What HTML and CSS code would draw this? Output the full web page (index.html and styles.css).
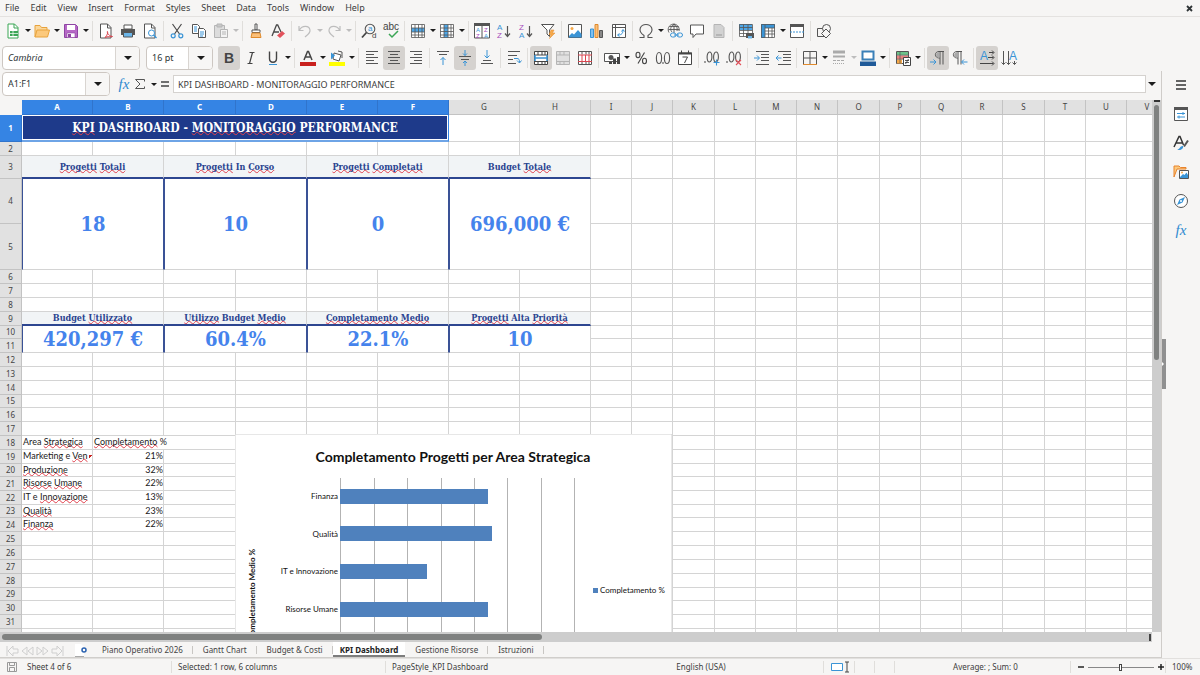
FILE: index.html
```html
<!DOCTYPE html>
<html lang="it">
<head>
<meta charset="utf-8">
<title>KPI Dashboard</title>
<link rel="stylesheet" href="styles.css">
</head>
<body>
<div class="app">
  <nav class="menubar">
    <button>File</button><button>Edit</button><button>View</button><button>Insert</button><button>Format</button><button>Styles</button><button>Sheet</button><button>Data</button><button>Tools</button><button>Window</button><button>Help</button>
    <button class="close" aria-label="Close"><svg width="7" height="7" viewBox="0 0 7 7"><path d="M1 1l5 5M6 1L1 6" stroke="#2e3436" stroke-width="1.8"/></svg></button>
  </nav>

  <div class="toolbar">
    <button class="tool" aria-label="New"><svg viewBox="0 0 16 16"><path d="M3 1h6.500l3.500 3.500V15H3z" fill="#fff" stroke="#3aa655"/><path d="M9 1v4h4" fill="none" stroke="#3aa655"/><path d="M5 8h8v5H5z" fill="#3aa655"/><path d="M5 10.500h8M8 8v5" stroke="#fff" stroke-width=".7"/></svg></button><button class="drop" aria-label="New options"></button>
    <button class="tool" aria-label="Open"><svg viewBox="0 0 16 16"><path d="M1 14V2.500h5l1.500 2H13V7" fill="#fbd79a" stroke="#e8a33d"/><path d="M1 14L3 7h12.500l-2 7z" fill="#fcc97c" stroke="#e8a33d"/></svg></button><button class="drop" aria-label="Open options"></button>
    <button class="tool" aria-label="Save"><svg viewBox="0 0 16 16"><path d="M1.500 1.500h11l2 2v11h-13z" fill="#b668c6" stroke="#8e44a3"/><path d="M4 2h8v5H4z" fill="#fff"/><path d="M4 10h8v4.500H4z" fill="#fff" stroke="#8e44a3" stroke-width=".6"/><path d="M5 11h3v3H5z" fill="#8e44a3"/></svg></button><button class="drop" aria-label="Save options"></button>
    <i class="sep"></i>
    <button class="tool" aria-label="Export as PDF"><svg viewBox="0 0 16 16"><path d="M2.500 1h7l3.500 3.500V15H2.500z" fill="#fff" stroke="#555"/><path d="M9.500 1v4H13" fill="none" stroke="#555"/><path d="M7 14.500c2.500-2 3-5.500 2.500-6s-.5 4 5 5c-1.500.8-5-.5-7.500 1z" fill="none" stroke="#d9454f"/></svg></button>
    <button class="tool" aria-label="Print"><svg viewBox="0 0 16 16"><path d="M4 2h8v4H4z" fill="#fff" stroke="#555"/><path d="M1 6h14v6H1z" fill="#555"/><path d="M3.500 9.500h9V14h-9z" fill="#6bb5e8" stroke="#555"/></svg></button>
    <button class="tool" aria-label="Print preview"><svg viewBox="0 0 16 16"><path d="M2.500 1h7l3.500 3.500V15H2.500z" fill="#fff" stroke="#555"/><path d="M9.500 1v4H13" fill="none" stroke="#555"/><circle cx="9.500" cy="10" r="3" fill="#fff" stroke="#3a94d6"/><path d="M11.500 12l3 3" stroke="#3a94d6" stroke-width="1.4"/></svg></button>
    <i class="sep"></i>
    <button class="tool" aria-label="Cut"><svg viewBox="0 0 16 16" fill="none"><path d="M3.500 1l7 10M12.500 1l-7 10" stroke="#4a4a4a" stroke-width="1.200"/><circle cx="4.200" cy="12.800" r="2" stroke="#3a94d6" stroke-width="1.200"/><circle cx="11.800" cy="12.800" r="2" stroke="#3a94d6" stroke-width="1.200"/></svg></button>
    <button class="tool" aria-label="Copy"><svg viewBox="0 0 16 16" fill="#fff" stroke="#555"><path d="M1.500 1.500h5l2 2v7h-7z"/><path d="M7.500 5.500h5l2 2v7h-7z"/><path d="M3 4h3M3 6h3M3 8h3M9 9h4M9 11h4M9 13h3" stroke="#3a94d6"/></svg></button>
    <button class="tool" aria-label="Paste" disabled><svg viewBox="0 0 16 16" fill="#dcdcdc" stroke="#b5b5b5"><path d="M1.500 2.500h10v12h-10z"/><path d="M4 1h5v3H4z" fill="#c8c8c8"/><path d="M7.500 6.500h7v8h-7z" fill="#f3f3f3"/><path d="M9 9h4M9 11h4"/></svg></button><button class="drop" aria-label="Paste options" disabled></button>
    <i class="sep"></i>
    <button class="tool" aria-label="Clone formatting"><svg viewBox="0 0 16 16"><path d="M7 1h2v6H7z" fill="#fff" stroke="#555"/><path d="M4 7h8v2.500H4z" fill="#fff" stroke="#555"/><path d="M4 10h8l1 4.500H3z" fill="#fbc07a" stroke="#e08a2c"/></svg></button>
    <button class="tool" aria-label="Clear formatting"><svg viewBox="0 0 16 16"><path d="M2 13L6.500 2h1.200L11 9M4 9h5" fill="none" stroke="#4a4a4a" stroke-width="1.300"/><path d="M7 12.500l5-4.500 3 2.500-5 4.500z" fill="#e2525c"/></svg></button>
    <i class="sep"></i>
    <button class="tool" aria-label="Undo" disabled><svg viewBox="0 0 16 16" fill="none" stroke="#bdbdbd" stroke-width="1.200"><path d="M2 3v4.500h4.500M2.500 7C5 2.500 12 2 13 7c.5 3-2 4.500-5 7"/></svg></button><button class="drop" aria-label="Undo list" disabled></button>
    <button class="tool" aria-label="Redo" disabled><svg viewBox="0 0 16 16" fill="none" stroke="#bdbdbd" stroke-width="1.200"><path d="M14 3v4.500H9.500M13.500 7C11 2.500 4 2 3 7c-.5 3 2 4.500 5 7"/></svg></button><button class="drop" aria-label="Redo list" disabled></button>
    <i class="sep"></i>
    <button class="tool" aria-label="Find and replace"><svg viewBox="0 0 16 16" fill="none"><circle cx="9" cy="6" r="4.800" stroke="#555" stroke-width="1.100"/><path d="M5.500 9.500L1 14.500" stroke="#444" stroke-width="1.800"/><text x="7" y="8" class="letter small blue">a</text><text x="11" y="15" class="letter small">d</text></svg></button>
    <button class="tool" aria-label="Spelling"><svg viewBox="0 0 16 16" fill="none"><text x="0" y="7" class="letter abc">abc</text><path d="M6 11l3 3 6-6" stroke="#3aa655" stroke-width="1.500"/></svg></button>
    <i class="sep"></i>
    <button class="tool" aria-label="Row"><svg viewBox="0 0 16 16" fill="none"><path d="M1.500 1.500h13v13h-13z" fill="#fff"/><path d="M1.500 5h13v4h-13z" fill="#4ea6e6"/><path d="M1.500 1.500h13v13h-13zM1.500 5h13M1.500 9h13M1.500 12h13M5 1.500v13M8.500 1.500v13M12 1.500v13" stroke="#555" stroke-width=".8"/></svg></button><button class="drop" aria-label="Row options"></button>
    <button class="tool" aria-label="Column"><svg viewBox="0 0 16 16" fill="none"><path d="M1.500 1.500h13v13h-13z" fill="#fff"/><path d="M5 1.500h4v13H5z" fill="#4ea6e6"/><path d="M1.500 1.500h13v13h-13zM1.500 5h13M1.500 8.500h13M1.500 12h13M5 1.500v13M9 1.500v13M12 1.500v13" stroke="#555" stroke-width=".8"/></svg></button><button class="drop" aria-label="Column options"></button>
    <i class="sep"></i>
    <button class="tool" aria-label="Sort"><svg viewBox="0 0 16 16"><path d="M.5 1h15v14H.5z" fill="#fff" stroke="#555"/><path d="M0 0h16v3H0z" fill="#555"/><path d="M8 3v12" stroke="#555"/><text x="2" y="9" class="letter tiny blue">A</text><text x="2" y="15" class="letter tiny purple">Z</text><text x="10" y="9" class="letter tiny purple">Z</text><text x="10" y="15" class="letter tiny blue">A</text></svg></button>
    <button class="tool" aria-label="Sort ascending"><svg viewBox="0 0 16 16"><text x="1" y="7" class="letter small blue">A</text><text x="1" y="15" class="letter small purple">Z</text><path d="M11.500 3v10M9 10.500l2.500 3 2.500-3" fill="none" stroke="#555" stroke-width="1.200"/></svg></button>
    <button class="tool" aria-label="Sort descending"><svg viewBox="0 0 16 16"><text x="1" y="7" class="letter small purple">Z</text><text x="1" y="15" class="letter small blue">A</text><path d="M11.500 3v10M9 10.500l2.500 3 2.500-3" fill="none" stroke="#555" stroke-width="1.200"/></svg></button>
    <button class="tool" aria-label="AutoFilter"><svg viewBox="0 0 16 16"><path d="M1.500 1.500h12.500L9.500 7v6.500L7 11V7z" fill="#fff" stroke="#555"/><path d="M11 7h3l-1.500 3H15l-5.500 5.500L11 11.500H9z" fill="#f6a94a" stroke="#e08a2c" stroke-width=".5"/></svg></button>
    <i class="sep"></i>
    <button class="tool" aria-label="Insert image"><svg viewBox="0 0 16 16"><path d="M1.500 1.500h13v13h-13z" fill="#fff" stroke="#555"/><circle cx="5" cy="5.500" r="1.500" fill="#f6a94a"/><path d="M2 13l3-3 2 1.500L11 7l3.500 4v3.500H2z" fill="#3a94d6"/></svg></button>
    <button class="tool" aria-label="Insert chart"><svg viewBox="0 0 16 16"><path d="M1.500 6h3v8.500h-3z" fill="#7fc0f0" stroke="#3a94d6"/><path d="M6 1.500h3v13H6z" fill="#fbc07a" stroke="#e08a2c"/><path d="M10.500 7.500h3v7h-3z" fill="#888" stroke="#555"/></svg></button>
    <button class="tool" aria-label="Insert pivot table"><svg viewBox="0 0 16 16"><path d="M1.500 1.500h13v13h-13zM1.500 4.500h13M4.500 1.500v13" fill="#fff" stroke="#555"/><path d="M7 12c4 0 5-2 5-5M10.500 8.500L12 6.500l1.500 2M8.500 10.500L6.500 12l2 1.500" fill="none" stroke="#3a94d6"/></svg></button>
    <i class="sep"></i>
    <button class="tool" aria-label="Special character"><svg viewBox="0 0 16 16"><path d="M1.500 14.500h4.500v-2C-1.500 7 3 1.500 8 1.500S17.500 7 10 12.500v2h4.500" fill="none" stroke="#555" stroke-width="1.100"/></svg></button><button class="drop" aria-label="Special character list"></button>
    <button class="tool" aria-label="Hyperlink"><svg viewBox="0 0 16 16" fill="none"><path d="M2 9.500A5.500 5.500 0 1 1 12 8M1.500 6.500h11M7 1v9M7 1c-4 3-4 6-2 8M7 1c3 2 3.500 4 3 7M2.500 3.500h9" stroke="#555" stroke-width=".9"/><rect x="3.500" y="10" width="5.500" height="4" rx="2" stroke="#3a94d6"/><rect x="10" y="10" width="5.500" height="4" rx="2" stroke="#3a94d6"/><path d="M7 12h5" stroke="#3a94d6"/></svg></button>
    <button class="tool" aria-label="Comment"><svg viewBox="0 0 16 16"><path d="M1.500 2h13v9H7l-3 3.500V11H1.500z" fill="#fff" stroke="#555"/></svg></button>
    <button class="tool" aria-label="Headers and footers" disabled><svg viewBox="0 0 16 16"><path d="M3 1.500h7l3 3v10H3z" fill="#d2d2d2" stroke="#b5b5b5"/><path d="M5 12h6" stroke="#999"/></svg></button>
    <i class="sep"></i>
    <button class="tool" aria-label="Define print area"><svg viewBox="0 0 16 16" fill="none"><path d="M1 1h13v13H1z" fill="#fff"/><path d="M1 1h13v6H1z" fill="#4ea6e6"/><path d="M1.500 1.500h13v12h-13zM1.500 4.500h13M1.500 7.500h13M1.500 10.500h13M5.500 1.500v12M10 1.500v12" stroke="#555" stroke-width=".8"/><path d="M8 10h8v5H8z" fill="#555"/><path d="M10 13h4v2.500h-4z" fill="#6bb5e8"/></svg></button>
    <button class="tool" aria-label="Freeze rows and columns"><svg viewBox="0 0 16 16" fill="none"><path d="M1.500 1.500h13v13h-13z" fill="#fff"/><path d="M1 1h14v4H5v10H1z" fill="#3a94d6"/><path d="M1.500 1.500h13v13h-13zM5 5h10M5 8h10M5 11h10M5 1.500v13M8.500 5v10M12 5v10" stroke="#555" stroke-width=".8"/></svg></button><button class="drop" aria-label="Freeze options"></button>
    <button class="tool" aria-label="Split window"><svg viewBox="0 0 16 16"><path d="M1.500 1.500h13v13h-13z" fill="#fff" stroke="#555"/><path d="M1 1h14v3H1z" fill="#555"/><path d="M1 9h14" stroke="#3a94d6" stroke-dasharray="2 1"/></svg></button>
    <i class="sep"></i>
    <button class="tool" aria-label="Shapes"><svg viewBox="0 0 16 16" fill="#f6f5f4" stroke="#555"><path d="M1.500 5.500h8v8h-8z"/><circle cx="10.500" cy="5.500" r="4"/><path d="M10 6l4.500 4.500L10 15l-4.500-4.500z"/></svg></button>
  </div>

  <div class="toolbar">
    <div class="combo font-combo"><input class="italic" aria-label="Font name" value="Cambria"><button aria-label="Font list"></button></div>
    <div class="combo size-combo"><input aria-label="Font size" value="16 pt"><button aria-label="Size list"></button></div>
    <button class="tool on" aria-label="Bold"><svg viewBox="0 0 16 16"><text x="3" y="13" class="letter large bold">B</text></svg></button>
    <button class="tool" aria-label="Italic"><svg viewBox="0 0 16 16"><path d="M6.500 2.500h5M4.500 13.500h5M9.500 2.500l-3 11" fill="none" stroke="#444" stroke-width="1.200"/></svg></button>
    <button class="tool" aria-label="Underline"><svg viewBox="0 0 16 16" fill="none"><path d="M4.500 1.500v7c0 5 7 5 7 0v-7" stroke="#444" stroke-width="1.400"/><path d="M4 14.500h8" stroke="#3a94d6"/></svg></button><button class="drop" aria-label="Underline options"></button>
    <i class="sep"></i>
    <button class="tool" aria-label="Font color"><svg viewBox="0 0 16 16"><path d="M4 10L7.500 1.500h1L12 10M5.500 7h5" fill="none" stroke="#444" stroke-width="1.500"/><path d="M0 12h16v4H0z" fill="#c9211e"/></svg></button><button class="drop" aria-label="Font color options"></button>
    <button class="tool" aria-label="Highlighting"><svg viewBox="0 0 16 16"><path d="M5 3l7 2-2 6-6-2z" fill="#fff" stroke="#555"/><path d="M2 2.500l4 3-4 4z" fill="#3a94d6"/><path d="M9 1l4 1v6" fill="none" stroke="#555"/><path d="M0 12h16v4H0z" fill="#ff0"/></svg></button><button class="drop" aria-label="Highlighting options"></button>
    <i class="sep"></i>
    <button class="tool" aria-label="Align left"><svg viewBox="0 0 16 16" stroke="#555"><path d="M2 1.500h12M2 4.500h8M2 7.500h12M2 10.500h8M2 13.500h12"/></svg></button>
    <button class="tool on" aria-label="Align center"><svg viewBox="0 0 16 16" stroke="#555"><path d="M2 1.500h12M4 4.500h8M2 7.500h12M4 10.500h8M2 13.500h12"/></svg></button>
    <button class="tool" aria-label="Align right"><svg viewBox="0 0 16 16" stroke="#555"><path d="M2 1.500h12M6 4.500h8M2 7.500h12M6 10.500h8M2 13.500h12"/></svg></button>
    <i class="sep"></i>
    <button class="tool" aria-label="Align top"><svg viewBox="0 0 16 16" fill="none" stroke="#555"><path d="M2 1.500h12M4 4.500h8"/><path d="M8 15V7.500M5.500 10L8 7.500l2.500 2.500" stroke="#3a94d6"/></svg></button>
    <button class="tool on" aria-label="Center vertically"><svg viewBox="0 0 16 16" fill="none" stroke="#555"><path d="M2 6.500h12M4 9.500h8"/><path d="M8 0v5.500M6 3.500l2 2 2-2M8 16v-5M6 13l2-2 2 2" stroke="#3a94d6"/></svg></button>
    <button class="tool" aria-label="Align bottom"><svg viewBox="0 0 16 16" fill="none" stroke="#555"><path d="M4 10.500h8M2 13.500h12"/><path d="M8 0v8M5.500 5.500L8 8l2.500-2.500" stroke="#3a94d6"/></svg></button>
    <i class="sep"></i>
    <button class="tool" aria-label="Wrap text"><svg viewBox="0 0 16 16" fill="none" stroke="#555"><path d="M2 1.500h12M2 5.500h9M2 9.500h5M2 13.500h8"/><path d="M8 8.500h3c2 0 2.500 1 2.500 4M11 10.500l2.500 2.500 2-2.500" stroke="#3a94d6"/></svg></button>
    <i class="sep"></i>
    <button class="tool on" aria-label="Merge and center"><svg viewBox="0 0 16 16" fill="none"><path d="M1.500 1.500h13v13h-13z" fill="#fff"/><path d="M1.500 1.500h13v13h-13zM1.500 5h13M1.500 11.500h13M5 1.500V5M9 1.500V5M12 1.500V5M5 11.500v3M9 11.500v3M12 11.500v3" stroke="#444"/><path d="M2 8h12M2 5v6M14 5v6" stroke="#3a94d6" stroke-width="1.500"/></svg></button>
    <button class="tool" aria-label="Merge cells" disabled><svg viewBox="0 0 16 16"><path d="M1.500 1.500h13v13h-13zM1.500 5h13M1.500 11.500h13M5 1.500V5M9 1.500V5M5 11.500v3M9 11.500v3" fill="#e0e0e0" stroke="#b5b5b5"/></svg></button>
    <button class="tool" aria-label="Unmerge cells"><svg viewBox="0 0 16 16" fill="none"><path d="M1.500 1.500h13v13h-13zM5 1.500v3M9 1.500v3M12 1.500v3M5 12v3M9 12v3M12 12v3" fill="#fff" stroke="#555"/><path d="M1 5h14M1 11.500h14M5 5v6M8.500 5v6M12 5v6" stroke="#d9454f"/></svg></button>
    <i class="sep"></i>
    <button class="tool" aria-label="Currency"><svg viewBox="0 0 16 16"><path d="M.5 3.500h15v8H.5z" fill="#fff" stroke="#555"/><circle cx="7" cy="7.500" r="2.500" fill="#555"/><path d="M5 12h3v2H5zM9 8.500h3V14H9zM13 7h3v7h-3z" fill="#444"/></svg></button><button class="drop" aria-label="Currency options"></button>
    <button class="tool" aria-label="Percent"><svg viewBox="0 0 16 16" fill="none" stroke="#444" stroke-width="1.100"><ellipse cx="5" cy="5" rx="2" ry="2.700"/><ellipse cx="11.500" cy="11" rx="2" ry="2.700"/><path d="M11.500 2.500l-6.500 11"/></svg></button>
    <button class="tool" aria-label="Number"><svg viewBox="0 0 16 16" fill="none" stroke="#555" stroke-width="1.100"><ellipse cx="4" cy="8" rx="2.600" ry="5.500"/><ellipse cx="12" cy="8" rx="2.600" ry="5.500"/><path d="M8 12v2"/></svg></button>
    <button class="tool" aria-label="Date"><svg viewBox="0 0 16 16" fill="none" stroke="#444"><path d="M1.500 3h13v11.500h-13z" fill="#fff"/><path d="M1 3.500h14" stroke-width="2"/><path d="M4.500.5v3M11.500.5v3M5.500 7h5l-3 6"/></svg></button>
    <i class="sep"></i>
    <button class="tool" aria-label="Add decimal place"><svg viewBox="0 0 16 16" fill="none" stroke="#555" stroke-width="1.100"><ellipse cx="5.500" cy="7" rx="2.400" ry="5"/><ellipse cx="12" cy="7" rx="2.400" ry="5"/><path d="M1 11v2"/><path d="M12.500 9.500v6M9.500 12.500h6" stroke="#3a94d6"/></svg></button>
    <button class="tool" aria-label="Delete decimal place"><svg viewBox="0 0 16 16" fill="none" stroke="#555" stroke-width="1.100"><ellipse cx="5.500" cy="7" rx="2.400" ry="5"/><ellipse cx="12" cy="7" rx="2.400" ry="5"/><path d="M1 11v2"/><path d="M10 10l5 5M15 10l-5 5" stroke="#e2525c"/></svg></button>
    <i class="sep"></i>
    <button class="tool" aria-label="Increase indent"><svg viewBox="0 0 16 16" fill="none" stroke="#555"><path d="M3 1.500h13M8 4.500h8M8 7.500h8M8 10.500h8M3 14.500h13"/><path d="M1 8h5M4 5.500L6.500 8 4 10.500" stroke="#3a94d6"/></svg></button>
    <button class="tool" aria-label="Decrease indent"><svg viewBox="0 0 16 16" fill="none" stroke="#555"><path d="M3 1.500h13M8 4.500h8M8 7.500h8M8 10.500h8M3 14.500h13"/><path d="M1 8h5.500M3.500 5.500L1 8l2.500 2.500" stroke="#3a94d6"/></svg></button>
    <i class="sep"></i>
    <button class="tool" aria-label="Borders"><svg viewBox="0 0 16 16" fill="none"><path d="M1.500 14V1.500h13V14M8 2v12M2 8h12" stroke="#555"/><path d="M1 14.500h14" stroke="#e08a2c"/></svg></button><button class="drop" aria-label="Border options"></button>
    <button class="tool" aria-label="Border style" disabled><svg viewBox="0 0 16 16" stroke="#aaa"><path d="M2 2h12" stroke-width="3"/><path d="M2 6.500h12" stroke-width="2"/><path d="M2 10.500h12" stroke-dasharray="3 1"/><path d="M2 13.500h12" stroke-dasharray="1 1"/></svg></button><button class="drop" aria-label="Border style options" disabled></button>
    <button class="tool" aria-label="Border color"><svg viewBox="0 0 16 16"><path d="M2.500 1.500h11v8h-11z" fill="#fff" stroke="#3a80b8" stroke-width="2"/><path d="M0 11.500h16V16H0z" fill="#1f5a99"/></svg></button><button class="drop" aria-label="Border color options"></button>
    <i class="sep"></i>
    <button class="tool" aria-label="Conditional formatting"><svg viewBox="0 0 16 16"><path d="M1.500 1.500h12v12h-12z" fill="#fff" stroke="#555"/><path d="M2 2h11v3H2z" fill="#6cc28a"/><path d="M2 5.500h11V9H2z" fill="#e8837f"/><path d="M2 9.500h5v4H2z" fill="#f6a94a"/><path d="M5 2v11M1.500 5.200h12M1.500 9.200h12" stroke="#555" stroke-width=".7"/><path d="M8.500 7.500h7v8h-7z" fill="#fff" stroke="#444"/><path d="M10 10.500h4M10 12.500h4M13.500 9l-3 5" stroke="#444" stroke-width=".9"/></svg></button><button class="drop" aria-label="Conditional formatting options"></button>
    <i class="sep"></i>
    <button class="tool on" aria-label="Left to right"><svg viewBox="0 0 16 16" fill="none"><path d="M10 8C4 8.500 4 1.500 9 1.500h5M10 1.500v13M13 1.500v13" stroke="#555"/><path d="M9.500 2v6C5 8 5 2 9.500 2z" fill="#aaa"/><path d="M0 12h5.500M3.500 9.500L6 12l-2.500 2.500" stroke="#3a94d6"/></svg></button>
    <button class="tool" aria-label="Right to left"><svg viewBox="0 0 16 16" fill="none"><path d="M6 8C0 8.500 0 1.500 5 1.500h5M6 1.500v13M9 1.500v13" stroke="#555"/><path d="M5.500 2v6C1 8 1 2 5.500 2z" fill="#aaa"/><path d="M15.500 12H10M12 9.500L9.500 12l2.500 2.500" stroke="#3a94d6"/></svg></button>
    <i class="sep"></i>
    <button class="tool on" aria-label="Text direction horizontal"><svg viewBox="0 0 16 16" fill="none"><text x="1" y="10" class="letter medium blue">A</text><path d="M10 2.500h4.500M13 .5l2 2-2 2M9 7.500h5.500M13 5.500l2 2-2 2M1 13.500h13.500M13 11.500l2 2-2 2" stroke="#444"/></svg></button>
    <button class="tool" aria-label="Text direction vertical"><svg viewBox="0 0 16 16" fill="none"><text x="8" y="10" class="letter medium blue">A</text><path d="M2.500 1v13.500M.5 12.500l2 2 2-2M7.500 1v13.500M5.500 12.500l2 2 2-2M13.500 11v3.500M11.500 12.500l2 2 2-2" stroke="#555"/></svg></button>
  </div>

  <div class="workspace">
    <div class="main">
      <div class="formula-bar">
        <div class="combo name-combo"><input aria-label="Name box" value="A1:F1"><button aria-label="Name list"></button></div>
        <button class="fx" aria-label="Function wizard">fx</button>
        <button class="sigma" aria-label="Select function"><svg viewBox="0 0 12 12"><path d="M10.500 3.500v-2h-9L6 6l-4.500 4.500h9v-2" fill="none" stroke="#555"/></svg></button><button class="drop" aria-label="Function list"></button>
        <button class="equals" aria-label="Formula"><svg viewBox="0 0 10 8"><path d="M1 2h8M1 6h8" stroke="#444" stroke-width="1.500"/></svg></button>
        <input class="formula" aria-label="Input line" value="KPI DASHBOARD - MONITORAGGIO PERFORMANCE">
        <button class="expand" aria-label="Expand formula bar"></button>
      </div>

      <div class="sheet-row">
        <div class="sheet">
          <table class="grid" id="grid"></table>
          <svg class="chart" viewBox="0 0 437 270" role="img" aria-label="Completamento Progetti per Area Strategica">
            <rect x="0" y="0" width="437" height="270" fill="#fff" stroke="#d0d0d0"/>
            <text x="218" y="28" class="chart-title">Completamento Progetti per Area Strategica</text>
            <path d="M105.500 44v226M139.500 44v226M172.500 44v226M206.500 44v226M239.500 44v226M272.500 44v226M306.500 44v226M339.500 44v226" stroke="#b3b3b3"/>
            <g fill="#4f81bd"><rect x="105" y="55" width="148" height="15"/><rect x="105" y="92" width="152" height="15"/><rect x="105" y="130" width="87" height="15"/><rect x="105" y="168" width="148" height="15"/><rect x="358" y="154" width="5" height="5"/></g>
            <g class="chart-label"><text x="103" y="65">Finanza</text><text x="103" y="103">Qualità</text><text x="103" y="140">IT e Innovazione</text><text x="103" y="178">Risorse Umane</text></g>
            <text x="365" y="159" class="chart-legend">Completamento %</text>
            <text x="20" y="115" transform="rotate(-90 20 115)" class="chart-axis">Completamento Medio %</text>
          </svg>
        </div>
        <div class="vscroll"><i class="handle"></i><i class="thumb"></i></div>
      </div>
      <div class="hscroll"><div class="track"><i class="thumb"></i><i class="handle"></i></div></div>

      <div class="tabs">
        <div class="tab-nav">
          <button aria-label="First sheet"><svg viewBox="0 0 15 12"><path d="M2 1v10M13 4H8V1L3 6l5 5V8h5z" /></svg></button>
          <button aria-label="Previous sheet"><svg viewBox="0 0 15 12"><path d="M7 2L2 6l5 4zM13 2L8 6l5 4z"/></svg></button>
          <button aria-label="Next sheet"><svg viewBox="0 0 15 12"><path d="M2 2l5 4-5 4zM8 2l5 4-5 4z"/></svg></button>
          <button aria-label="Last sheet"><svg viewBox="0 0 15 12"><path d="M13 1v10M2 4h5V1l5 5-5 5V8H2z"/></svg></button>
        </div>
        <button class="add-sheet" aria-label="Add sheet"><svg viewBox="0 0 14 14"><path d="M1 1h6l3 3v10H1z" fill="#fff"/><path d="M1 14h9" stroke="#555"/><circle cx="10" cy="7" r="2" fill="#fff" stroke="#2a62b0" stroke-width="1.500"/></svg></button>
        <button class="tab">Piano Operativo 2026</button><button class="tab">Gantt Chart</button><button class="tab">Budget &amp; Costi</button><button class="tab active">KPI Dashboard</button><button class="tab">Gestione Risorse</button><button class="tab">Istruzioni</button>
      </div>
    </div>

    <aside class="sidebar">
      <button class="splitter" aria-label="Hide sidebar"></button>
      <button aria-label="Sidebar settings"><svg viewBox="0 0 16 16"><path d="M3 4h10M3 8h10M3 12h10" stroke="#333" stroke-width="1.500"/></svg></button>
      <button aria-label="Properties"><svg viewBox="0 0 16 16"><path d="M1.500 1.500h13v13h-13z" fill="#fff" stroke="#555"/><path d="M1 1h14v3H1z" fill="#555"/><path d="M4 7.500h8M10 6v3M4 11h8M6 9.500v3" stroke="#3a94d6"/></svg></button>
      <button aria-label="Styles"><svg viewBox="0 0 16 16" fill="none"><path d="M1 12L6 1.500h1L10.500 10M3 8h6" stroke="#333" stroke-width="1.500"/><path d="M15 5.500l-4 6" stroke="#555" stroke-width="2"/><path d="M4 14.500c3 0 3-4 6-3.500 1 3-3 5-6 3.500z" fill="#3a94d6"/></svg></button>
      <button aria-label="Gallery"><svg viewBox="0 0 16 16"><path d="M1 13V2h5l1.500 1.500H13V5H4z" fill="#fcc97c" stroke="#e8832d"/><path d="M6.500 6.500h9v8h-9z" fill="#fff" stroke="#555"/><path d="M7 13l3-3 1.500 1 2-2.500L15 11v3H7z" fill="#3a94d6"/><circle cx="9" cy="8.500" r="1" fill="#f6a94a"/></svg></button>
      <button aria-label="Navigator"><svg viewBox="0 0 16 16"><circle cx="8" cy="8" r="6.500" fill="#fff" stroke="#555"/><path d="M12 4L9.500 9.500 4 12l2.500-5.500z" fill="#3a94d6"/><circle cx="8" cy="8" r="1" fill="#fff"/></svg></button>
      <button class="side-fx" aria-label="Functions">fx</button>
    </aside>
  </div>

  <footer class="status">
    <div class="st-sheet"><svg viewBox="0 0 12 12"><path d="M1.500 1.500h9v9h-9zM3.500 1.500v3h5v-3M3.500 10.500v-4h5v4" fill="none" stroke="#999"/></svg><span>Sheet 4 of 6</span></div>
    <div class="st-selected">Selected: 1 row, 6 columns</div>
    <div class="st-style">PageStyle_KPI Dashboard</div>
    <div class="st-lang">English (USA)</div>
    <div class="st-mode"><svg viewBox="0 0 20 12"><path d="M1.500 2.500h11v7h-11z" fill="#fff" stroke="#3a94d6"/><path d="M15 1h4M15 11h4M17 1v10" stroke="#444"/></svg></div>
    <div class="st-small"></div>
    <div class="st-small"></div>
    <div class="st-sum">Average: ; Sum: 0</div>
    <div class="st-zoom"><button aria-label="Zoom out"><svg viewBox="0 0 8 8"><path d="M1 4h6" stroke="#222" stroke-width="1.500"/></svg></button><input type="range" aria-label="Zoom" min="0" max="100" value="49"><button aria-label="Zoom in"><svg viewBox="0 0 8 8"><path d="M1 4h6M4 1v6" stroke="#222" stroke-width="1.500"/></svg></button></div>
    <div class="st-percent">100%</div>
  </footer>
</div>
<script src="grid.js"></script>
</body>
</html>
```

FILE: grid.js
```js
// Column widths, row heights and cell contents of the visible sheet area.
const columnWidths = [71, 71, 72, 71, 71, 71, 71, 71, 41, 41, 42, 41, 41, 41, 42, 41, 41, 41, 42, 41, 41, 41];
const rowHeights = [27, 14, 23, 45, 46, 14, 14, 14, 14, 13, 14, 14, 14, 14, 13, 14, 14, 14, 14, 13, 14, 14, 13, 14, 14, 14, 14, 14, 13, 14, 14, 14];

// Words between tildes are unknown to the spelling dictionary.
const cells = {
  A1: { text: '~KPI~ DASHBOARD - ~MONITORAGGIO~ PERFORMANCE', cols: 6, cls: 'title' },
  A3: { text: '~Progetti~ ~Totali~', cols: 2, cls: 'kpi-label' },
  C3: { text: '~Progetti~ In ~Corso~', cols: 2, cls: 'kpi-label' },
  E3: { text: '~Progetti~ ~Completati~', cols: 2, cls: 'kpi-label' },
  G3: { text: 'Budget ~Totale~', cols: 2, cls: 'kpi-label' },
  A4: { text: '18', cols: 2, rows: 2, cls: 'kpi-value' },
  C4: { text: '10', cols: 2, rows: 2, cls: 'kpi-value' },
  E4: { text: '0', cols: 2, rows: 2, cls: 'kpi-value' },
  G4: { text: '696,000 €', cols: 2, rows: 2, cls: 'kpi-value last' },
  A9: { text: 'Budget ~Utilizzato~', cols: 2, cls: 'kpi-label' },
  C9: { text: '~Utilizzo~ Budget ~Medio~', cols: 2, cls: 'kpi-label' },
  E9: { text: '~Completamento~ ~Medio~', cols: 2, cls: 'kpi-label' },
  G9: { text: '~Progetti~ Alta ~Priorità~', cols: 2, cls: 'kpi-label' },
  A10: { text: '420,297 €', cols: 2, rows: 2, cls: 'kpi-value' },
  C10: { text: '60.4%', cols: 2, rows: 2, cls: 'kpi-value' },
  E10: { text: '22.1%', cols: 2, rows: 2, cls: 'kpi-value' },
  G10: { text: '10', cols: 2, rows: 2, cls: 'kpi-value last' },
  A18: { text: 'Area ~Strategica~' },
  B18: { text: '~Completamento~ %', cols: 2 },
  A19: { text: 'Marketing e ~Ven~', cls: 'clipped' },
  B19: { text: '21%', cls: 'num' },
  A20: { text: '~Produzione~' },
  B20: { text: '32%', cls: 'num' },
  A21: { text: '~Risorse~ ~Umane~' },
  B21: { text: '22%', cls: 'num' },
  A22: { text: 'IT e ~Innovazione~' },
  B22: { text: '13%', cls: 'num' },
  A23: { text: '~Qualità~' },
  B23: { text: '23%', cls: 'num' },
  A24: { text: '~Finanza~' },
  B24: { text: '22%', cls: 'num' }
};

const letter = i => String.fromCharCode(65 + i);
const spell = t => t.replace(/~([^~]+)~/g, '<span class="sp">$1</span>');

const covered = new Set();
let html = '<colgroup><col class="row-col">' +
  columnWidths.map(w => `<col style="width:${w}px">`).join('') + '</colgroup><thead><tr><th></th>' +
  columnWidths.map((w, c) => `<th class="${c < 6 ? 'sel' : ''}">${letter(c)}</th>`).join('') + '</tr></thead><tbody>';

rowHeights.forEach((h, r) => {
  html += `<tr style="height:${h}px"><th class="${r === 0 ? 'sel' : ''}">${r + 1}</th>`;
  columnWidths.forEach((w, c) => {
    const ref = letter(c) + (r + 1);
    if (covered.has(ref)) return;
    const cell = cells[ref];
    if (!cell) { html += '<td></td>'; return; }
    const cols = cell.cols || 1, rows = cell.rows || 1;
    for (let y = 0; y < rows; y++) for (let x = 0; x < cols; x++) covered.add(letter(c + x) + (r + 1 + y));
    html += `<td colspan="${cols}" rowspan="${rows}" class="${cell.cls || ''}">${spell(cell.text)}</td>`;
  });
  html += '</tr>';
});
document.getElementById('grid').innerHTML = html + '</tbody>';
```

FILE: styles.css
```css
* { box-sizing: border-box; }
body { margin: 0; background: #f6f5f4; color: #3d3d3d; font: 9px/12px "Noto Sans", sans-serif; }
button, input { font: inherit; color: inherit; margin: 0; padding: 0; border: 0; background: none; }
svg { display: block; }
.app { display: flex; flex-direction: column; height: 100vh; overflow: hidden; }

.menubar { display: flex; align-items: center; height: 17px; padding: 0 6px 0 0; border-bottom: 1px solid #e4e2e0; }
.menubar button { padding: 0 6px 0 5px; }
.menubar .close { margin-left: auto; padding: 0 1px; }

.toolbar { display: flex; align-items: center; height: 27px; padding-left: 2px; }
.tool { display: flex; align-items: center; justify-content: center; flex: none; width: 22px; height: 24px; border-radius: 3px; }
.tool svg { width: 16px; height: 16px; overflow: visible; }
.tool.on { background: #d5d2cf; }
.drop { flex: none; width: 7px; height: 22px; display: flex; align-items: center; justify-content: center; }
.drop::before, .combo button::before, .expand::before { content: ""; border: 3px solid transparent; border-top-color: #1c1c1c; border-bottom: 0; }
.drop:disabled::before { border-top-color: #bdbdbd; }
.sep { flex: none; width: 1px; height: 20px; margin: 0 2px; background: #e0dedb; }
.drop + .sep { margin-left: 3px; }
.letter { font-family: "Liberation Sans", sans-serif; fill: #444; }
.letter.tiny { font-size: 6px; }
.letter.small { font-size: 8px; }
.letter.abc { font-size: 10px; }
.letter.medium { font-size: 12px; }
.letter.large { font-size: 14px; }
.letter.blue { fill: #3a94d6; }
.letter.purple { fill: #a64dbb; }
.bold { font-weight: 700; }

.combo { display: flex; flex: none; height: 24px; border: 1px solid #cdc7c2; border-radius: 4px; background: #fff; overflow: hidden; }
.combo input { flex: 1; min-width: 0; padding-left: 5px; color: #2e3436; }
.combo button { width: 24px; display: flex; align-items: center; justify-content: center; border-left: 1px solid #d9d5d1; background: #f7f6f5; }
.combo button::before, .expand::before { border-width: 4px; border-bottom: 0; }
.font-combo { width: 138px; }
.size-combo { width: 67px; margin: 0 5px 0 6px; }
.italic { font-style: italic; }

.workspace { display: flex; flex: 1; min-height: 0; }
.main { display: flex; flex-direction: column; flex: 1; min-width: 0; }
.formula-bar { display: flex; align-items: center; flex: none; height: 29px; padding: 0 3px 3px 2px; }
.name-combo { width: 108px; }
.fx, .side-fx { font: italic 15px/16px "Liberation Serif", serif; color: #2f8ad0; }
.fx { width: 14px; margin-left: 7px; }
.sigma { width: 12px; margin: 0 4px 0 3px; }
.equals { width: 10px; margin: 0 3px; }
.formula { flex: 1; min-width: 0; height: 18px; padding-left: 4px; border: 1px solid #d5d2cf; background: #fff; }
.expand { width: 12px; display: flex; justify-content: center; }

.sheet-row { display: flex; flex: 1; min-height: 0; }
.sheet { position: relative; flex: 1; min-width: 0; overflow: hidden; background: #fff; }
.grid { border-collapse: separate; border-spacing: 0; table-layout: fixed; width: 0; color: #1a1a1a; }
.row-col { width: 22px; }
.grid th { padding: 0; border-right: 1px solid #c3c3c3; border-bottom: 1px solid #c3c3c3; background: #e1e1e1; color: #444; font: 8px/12px "Noto Sans", sans-serif; }
.grid thead th { height: 15px; line-height: 14px; }
.grid thead th:first-child { background: #f6f5f4; border-color: #f6f5f4; }
.grid th.sel { background: #3584e4; border-color: #3074cc; color: #fff; font-weight: 700; }
.grid td { padding: 0 1px; border-right: 1px solid #d4d4d4; border-bottom: 1px solid #d4d4d4; font: 9px/12px Lato, sans-serif; white-space: nowrap; overflow: hidden; vertical-align: top; }
.grid .num { padding: 0; text-align: right; }
.grid .clipped { background: linear-gradient(135deg, #c9211e 50%, transparent 50%) right 5px / 3px 3px no-repeat; }
.grid .title, .grid .kpi-label, .grid .kpi-value { font-family: "DejaVu Serif Condensed", "DejaVu Serif", serif; font-stretch: condensed; font-weight: 700; text-align: center; vertical-align: middle; }
.grid .title { border-right: 1px solid #3584e4; border-bottom: 2px solid #6ea4e6; background: #1e3a8a; color: #fff; box-shadow: inset 0 0 0 1px #fff; font-size: 12px; line-height: 18px; }
.grid .kpi-label { padding-top: 1px; border-bottom: 2px solid #2d4690; background: #f1f4f6; color: #2a4390; font-size: 9px; line-height: 11px; }
.grid .kpi-value { border-left: 1px solid #3a5296; border-right: 1px solid #3a5296; color: #4583ec; font-size: 20px; line-height: 24px; }
.grid .kpi-value.last { border-right-color: #d4d4d4; }
.sp { text-decoration: underline wavy #e0404c 1px; text-underline-offset: -1px; text-decoration-skip-ink: none; }

.chart { position: absolute; left: 235px; top: 334px; width: 437px; height: 270px; font-family: Lato, sans-serif; fill: #111; }
.chart-title { font-size: 14px; font-weight: 700; text-anchor: middle; }
.chart-label { font-size: 8px; text-anchor: end; }
.chart-legend { font-size: 8px; }
.chart-axis { font-size: 8px; font-weight: 700; text-anchor: end; }

.vscroll { display: flex; flex-direction: column; align-items: center; gap: 3px; width: 9px; background: #cdcdcd; }
.vscroll .handle { width: 6px; height: 2px; background: #333; }
.vscroll .thumb { width: 5px; height: 48%; border-radius: 3px; background: #7f8180; }
.hscroll { flex: none; padding-right: 9px; }
.track { display: flex; align-items: center; justify-content: space-between; height: 10px; padding: 0 1px 0 2px; background: #cdcdcd; }
.track .thumb { width: 47%; height: 6px; border-radius: 3px; background: #7f8180; }
.track .handle { width: 2px; height: 7px; background: #444; }

.tabs { display: flex; flex: none; height: 16px; border-bottom: 1px solid #d0cecb; font-size: 8px; }
.tab-nav { display: flex; padding: 2px 9px 0 5px; }
.tab-nav svg { width: 15px; height: 12px; fill: none; stroke: #cfcfcf; }
.add-sheet { width: 14px; margin-right: 4px; }
.tab { position: relative; padding: 0 10px; color: #444; }
.tab:not(.active)::after { content: ""; position: absolute; right: 0; top: 4px; height: 8px; border-right: 1px solid #c8c6c3; }
.tab.active { padding: 0 7px; background: #fff; box-shadow: inset 0 -2px #7d7d7d; color: #222; font-weight: 700; }

.sidebar { position: relative; display: flex; flex-direction: column; align-items: center; gap: 13px; width: 39px; padding-top: 6px; border-left: 1px solid #cfccc9; }
.sidebar svg { width: 16px; height: 16px; }
.side-fx { height: 16px; }
.sidebar .splitter { position: absolute; left: 0; top: 268px; width: 4px; height: 50px; background: #909090; }
.sidebar .splitter::before { content: ""; position: absolute; left: 0; top: 23px; border: 2px solid transparent; border-left-color: #fff; border-right: 0; }

.status { display: grid; grid-template-columns: 172px 214fr 187fr 251fr 31px 20px 20px 176px 95px 34px; flex: none; height: 17px; align-items: center; border-top: 1px solid #e2e0de; font-size: 8px; }
.status > div { height: 12px; padding-left: 6px; border-right: 1px solid #e0dedb; }
.status > .st-style, .status > .st-percent { border-right: 0; }
.st-sheet, .st-zoom { display: flex; align-items: center; }
.st-sheet { gap: 9px; }
.st-sheet svg { width: 12px; height: 12px; }
.st-lang, .st-sum { text-align: center; }
.st-mode svg { width: 20px; height: 12px; }
.st-zoom { gap: 3px; }
.st-zoom svg { width: 8px; height: 8px; }
.st-zoom input { flex: 1; min-width: 0; height: 10px; appearance: none; }
.st-zoom input::-webkit-slider-runnable-track { height: 1px; background: #888; }
.st-zoom input::-webkit-slider-thumb { appearance: none; width: 3px; height: 7px; margin-top: -3px; border: 1px solid #444; background: #fff; }
```
